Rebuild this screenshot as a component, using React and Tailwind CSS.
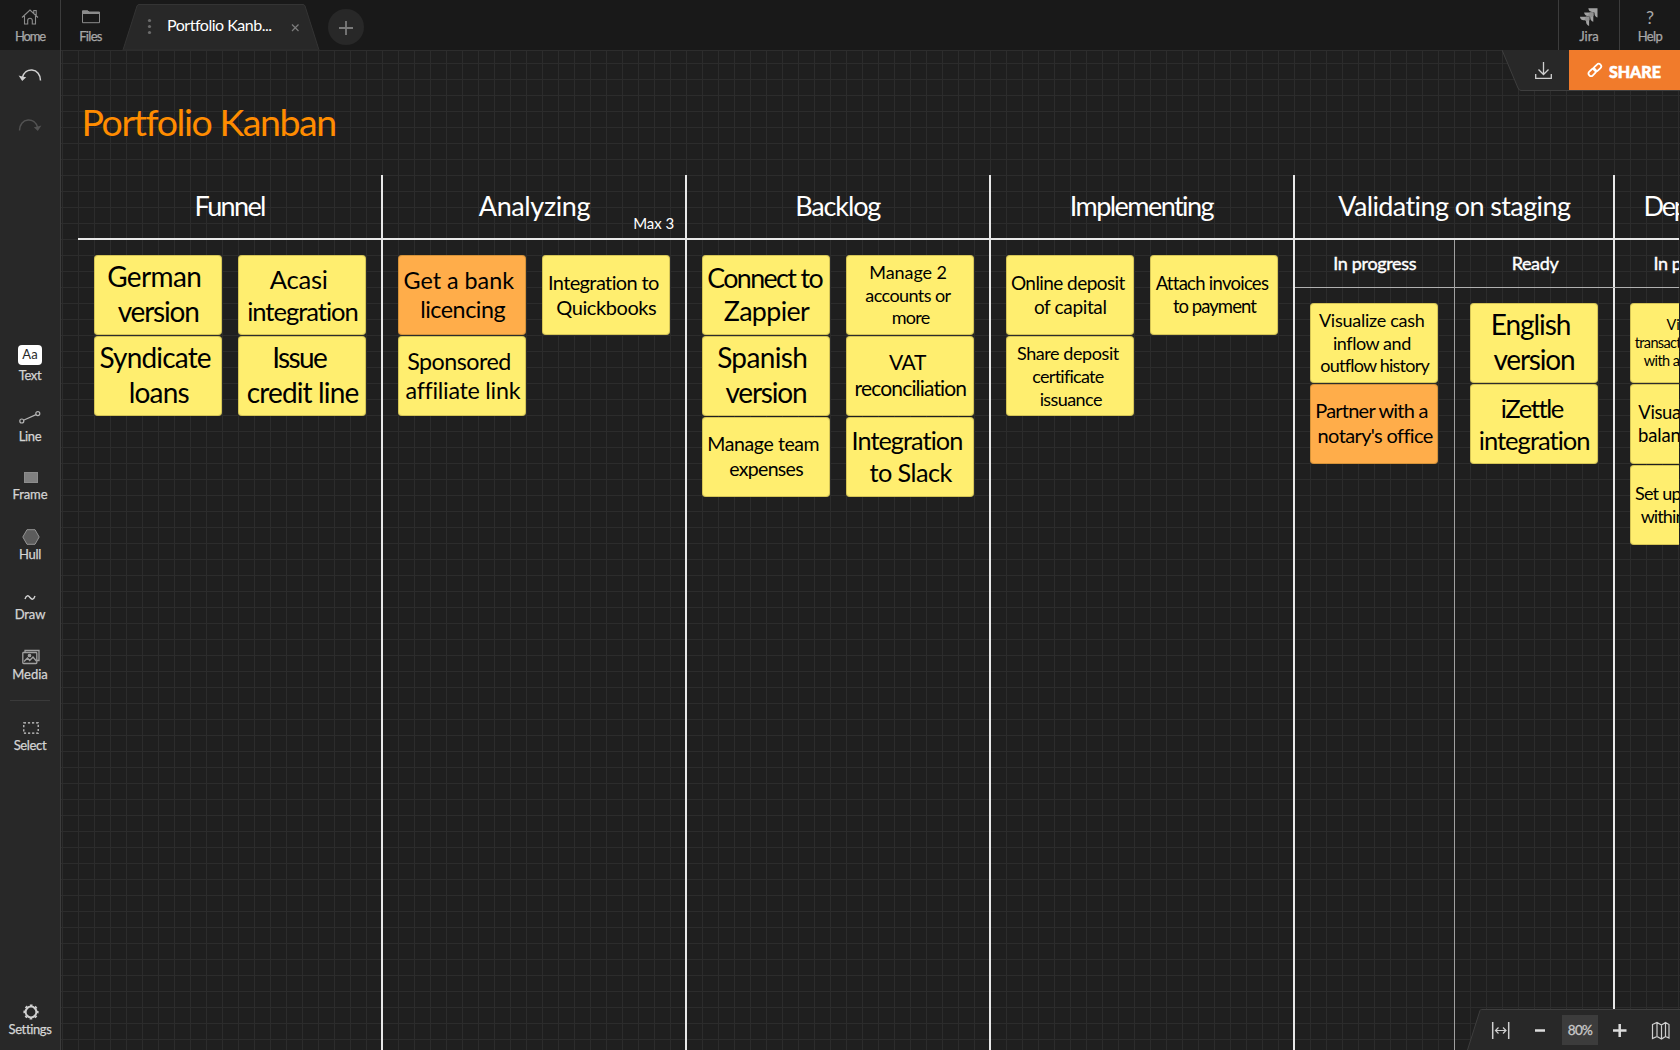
import { useLayoutEffect, useRef } from 'react';

// Text set to an exact measure: tracking is derived from the natural width.
function Fit({ w, size, lead, children, className = '' }) {
  const ref = useRef(null);
  useLayoutEffect(() => {
    const el = ref.current;
    el.style.letterSpacing = '0px';
    if (!w) return;
    const natural = el.getBoundingClientRect().width;
    el.style.letterSpacing = (w - natural + size * 0.05) / Math.max(1, children.length) + 'px';
  }, [w, size, children]);
  return (
    <span
      ref={ref}
      className={'block w-max whitespace-nowrap ' + className}
      style={{ fontSize: size, lineHeight: lead + 'px' }}
    >
      {children}
    </span>
  );
}

// b: first baseline inside the note, lead: line pitch, lines: [text, left, width]
function Note({ note }) {
  const { s, b, lead, lines, orange } = note;
  return (
    <div
      className={
        'h-20 w-32 shrink-0 overflow-visible rounded-[4px] text-black shadow-[inset_0_0_0_1px_rgba(60,50,0,0.22)] ' +
        (orange ? 'bg-[#ffad4a]' : 'bg-[#ffee6f]')
      }
      style={{ paddingTop: b + 0.6 - lead / 2 - 0.387 * s }}
    >
      {lines.map(([t, x, w]) => (
        <div key={t} style={{ paddingLeft: x - s * 0.02, height: lead }}>
          <Fit w={w} size={s} lead={lead}>{t}</Fit>
        </div>
      ))}
    </div>
  );
}

const n = (s, b, lead, lines, orange) => ({ s, b, lead, lines, orange });

const columns = [
  {
    title: 'Funnel', tx: 118, tw: 69, width: 'w-[305px]', pad: 'pl-4',
    stacks: [
      [
        n(28, 32, 34.7, [['German', 13.7, 92.7], ['version', 24.3, 79.5]]),
        n(28, 32, 34.7, [['Syndicate', 6, 110], ['loans', 35.3, 58.7]]),
      ],
      [
        n(25.6, 33, 32, [['Acasi', 32.3, 56.7], ['integration', 9.7, 109.7]]),
        n(28, 32, 34.7, [['Issue', 34.7, 52.7], ['credit line', 9.3, 110.3]]),
      ],
    ],
  },
  {
    title: 'Analyzing', tx: 97.3, tw: 110, limit: 'Max 3', width: 'w-[304px]', pad: 'pl-[15px]',
    stacks: [
      [
        n(23.3, 33.7, 29, [['Get a bank', 6, 109.3], ['licencing', 22.7, 83.7]], true),
        n(23.3, 33.7, 29, [['Sponsored', 9.7, 102.3], ['affiliate link', 8, 112.3]]),
      ],
      [n(20, 34.6, 24.5, [['Integration to', 6.3, 110.3], ['Quickbooks', 14.7, 99]])],
    ],
  },
  {
    title: 'Backlog', tx: 109.7, tw: 83.7, width: 'w-[304px]', pad: 'pl-[15px]',
    stacks: [
      [
        n(26.8, 33, 33.3, [['Connect to', 5.7, 113.7], ['Zappier', 22.3, 84]]),
        n(28, 32, 34.7, [['Spanish', 15.7, 88.7], ['version', 24, 79.5]]),
        n(19.5, 34.3, 24.5, [['Manage team', 5.7, 111], ['expenses', 27.7, 72.7]]),
      ],
      [
        n(18, 24, 22.4, [['Manage 2', 23.7, 76.7], ['accounts or', 19.7, 84.3], ['more', 46, 37]]),
        n(21, 33.7, 26, [['VAT', 43.3, 36], ['reconciliation', 9, 111]]),
        n(25.3, 33, 31.7, [['Integration', 6, 110], ['to Slack', 24, 81]]),
      ],
    ],
  },
  {
    title: 'Implementing', tx: 80.3, tw: 142.3, width: 'w-[304px]', pad: 'pl-[15px]',
    stacks: [
      [
        n(19, 35, 24, [['Online deposit', 5.3, 113], ['of capital', 28.3, 71.7]]),
        n(18, 24, 22.6, [['Share deposit', 11.3, 101], ['certificate', 26.7, 70.3], ['issuance', 34, 61.3]]),
      ],
      [n(18.5, 35, 23.3, [['Attach invoices', 6, 111], ['to payment', 23.3, 82]])],
    ],
  },
  {
    title: 'Validating on staging', tx: 44.7, tw: 231.3, width: 'w-[320px]',
    subs: [
      {
        title: 'In progress', tx: 39.3, tw: 82, width: 'w-40',
        notes: [
          n(18, 23.7, 22.6, [['Visualize cash', 9.3, 104.7], ['inflow and', 23.3, 77], ['outflow history', 10.7, 107.3]]),
          n(20, 33.7, 25.3, [['Partner with a', 5.7, 111.3], ["notary's office", 8, 113]], true),
        ],
      },
      {
        title: 'Ready', tx: 57.7, tw: 45.7, width: 'w-40',
        notes: [
          n(28, 32, 34.7, [['English', 21.3, 78.3], ['version', 24, 79.5]]),
          n(25.6, 33, 32, [['iZettle', 31.3, 60], ['integration', 9.3, 110]]),
        ],
      },
    ],
  },
  {
    title: 'Dep', tx: 30, tw: 42, width: 'w-[65px]',
    subs: [
      {
        title: 'In p', tx: 39.5, tw: 27, width: 'w-[65px]',
        notes: [
          n(14.5, 26.7, 18.2, [['Vi', 36.7, 12.5], ['transact', 5, 45.5], ['with a', 14, 35]]),
          n(18.5, 34.7, 23, [['Visua', 8.7, 41.5], ['balan', 8.3, 42]]),
          n(18, 35, 22.3, [['Set up', 5.3, 45], ['within', 11, 43]]),
        ],
      },
    ],
  },
];

function Column({ col, last }) {
  return (
    <div className={'flex h-full shrink-0 flex-col ' + col.width + (last ? '' : ' border-r-2 border-[#e8e8e8]')}>
      <div className="flex h-[63px] shrink-0 justify-between">
        <div className="pt-[15px]" style={{ paddingLeft: col.tx - 1.5 }}>
          <Fit w={col.tw} size={27} lead={32}>{col.title}</Fit>
        </div>
        {col.limit && (
          <div className="pt-[39px] pr-[11px]">
            <Fit w={40} size={15} lead={18}>{col.limit}</Fit>
          </div>
        )}
      </div>
      <div className="h-[2px] shrink-0 bg-[#e8e8e8]" />
      {col.stacks && (
        <div className={'flex gap-4 pt-[15px] ' + col.pad}>
          {col.stacks.map((stack, i) => (
            <div key={i} className="flex flex-col gap-px">
              {stack.map((note, j) => <Note key={j} note={note} />)}
            </div>
          ))}
        </div>
      )}
      {col.subs && (
        <div className="flex min-h-0 flex-1">
          {col.subs.map((sub, i) => (
            <div
              key={sub.title}
              className={'flex h-full shrink-0 flex-col ' + sub.width + (i < col.subs.length - 1 ? ' border-r border-[#a0a0a0]' : '')}
            >
              <div className="h-[48px] shrink-0 border-b border-[#b0b0b0] pt-[11px]" style={{ paddingLeft: sub.tx - 1 }}>
                <Fit w={sub.tw} size={18} lead={24} className="[-webkit-text-stroke:0.4px_white]">{sub.title}</Fit>
              </div>
              <div className="flex flex-col gap-px pt-[15px] pl-[15px]">
                {sub.notes.map((note, j) => <Note key={j} note={note} />)}
              </div>
            </div>
          ))}
        </div>
      )}
    </div>
  );
}

function Tool({ label, w, children, className = '' }) {
  return (
    <div className={'flex h-9 w-full shrink-0 flex-col items-center text-[#d4d4d4] ' + className}>
      <div className="flex h-5 shrink-0 items-center justify-center">{children}</div>
      <Fit w={w} size={13} lead={18} className="[-webkit-text-stroke:0.25px_#d4d4d4]">{label}</Fit>
    </div>
  );
}

function TopItem({ label, w, children, className = '' }) {
  return (
    <div className={'flex h-[50px] shrink-0 flex-col items-center pt-[7px] text-[#a8a8a8] ' + className}>
      <div className="flex h-5 shrink-0 items-center justify-center">{children}</div>
      <Fit w={w} size={13} lead={18} className="[-webkit-text-stroke:0.25px_#a8a8a8]">{label}</Fit>
    </div>
  );
}

function TopBar() {
  return (
    <header className="flex h-[50px] shrink-0 bg-[#191919]">
      <TopItem label="Home" w={29.5} className="w-[61px] border-r border-[#3c3c3c]">
        <svg width="18" height="16" viewBox="0 0 18 16" fill="none" stroke="#8c8c8c" strokeWidth="1.1">
          <path d="M1 8.5 9 1l8 7.5M3.5 7v8h3.2v-3.4a2.3 2.3 0 0 1 4.6 0V15h3.2V7M12.8 4V1.5h2.4v4.8" />
        </svg>
      </TopItem>
      <TopItem label="Files" w={22} className="w-[61px] pr-[2px]">
        <svg width="18" height="14" viewBox="0 0 18 14" fill="none" stroke="#8c8c8c" strokeWidth="1">
          <path d="M.5 3.5v9.2h17V3.5z" />
          <path d="M.5 3.5V.8h5.2L7 2h10.5v1.5z" fill="#8c8c8c" />
        </svg>
      </TopItem>
      <div className="relative flex h-[50px] w-[198px] shrink-0 items-center">
        <svg className="absolute inset-0" width="198" height="50" viewBox="0 0 198 50">
          <path d="M1 50 15 6q.6-1.5 2-1.5H181q1.4 0 2 1.5L197 50z" fill="#282828" stroke="#343434" />
          <path d="M1 50H197" stroke="#282828" />
          <g fill="#6c6c6c">
            <circle cx="27.5" cy="20.5" r="1.6" />
            <circle cx="27.5" cy="26.5" r="1.6" />
            <circle cx="27.5" cy="32.5" r="1.6" />
          </g>
          <path d="m170 24.5 6.5 6.5m0-6.5-6.500 6.500" stroke="#7c7c7c" strokeWidth="1.2" />
        </svg>
        <div className="relative pb-px pl-[45px] text-white">
          <Fit w={103.5} size={16} lead={20}>Portfolio Kanb...</Fit>
        </div>
      </div>
      <div className="mt-[9px] ml-2 flex size-9 items-center justify-center rounded-full bg-[#282828]">
        <svg className="mt-0.5" width="16" height="16" viewBox="0 0 16 16">
          <path d="M8 1v14M1 8h14" stroke="#7a7a7a" strokeWidth="1.8" />
        </svg>
      </div>
      <div className="ml-auto flex">
        <TopItem label="Jira" w={19} className="w-[61px] border-l border-[#3c3c3c]">
          <svg width="18" height="18" viewBox="0 0 18 18" fill="#a2a2a2">
            <path d="M8.3.3h9.2v9.2c-2-.6-3-2-3-3.800V5.300q0-1.400-1.400-1.400h-1.200C10 3.900 8.600 2.500 8.300.3z" />
            <path d="M7.500 4.500h5.800v9.200c-2-.6-3-2-3-3.800V9.500q0-1.400-1.400-1.400H7.700C5.800 8.100 4.400 6.700 4.100 4.500z" />
            <path d="M3.500 8.700h5.600v9.200c-2-.6-3-2-3-3.800v-.4q0-1.400-1.400-1.400H3.500C1.600 12.300.2 10.900-.1 8.700z" />
            <path d="m10 4 3.800 0v4l-3.500 1.500-2.500-2zM6 8.300h3.800v4L6.500 13.500l-1.800-2z" fill="#8a8a8a" opacity=".75" />
          </svg>
        </TopItem>
        <TopItem label="Help" w={24} className="w-[61px] border-l border-[#3c3c3c]">
          <span className="text-[18px] leading-5">?</span>
        </TopItem>
      </div>
    </header>
  );
}

function SideBar() {
  return (
    <aside className="flex w-[61px] shrink-0 flex-col border-r border-[#3c3c3c] bg-[#282828]">
      <div className="flex h-[296px] shrink-0 flex-col items-center pt-[18px]">
        <svg width="24" height="14" viewBox="0 0 24 14" fill="none" stroke="#d0d0d0" strokeWidth="1.5">
          <path d="M4 10.500C5.500 4 10 1.700 14 2c5 .4 8.500 4.500 8.500 10.500" />
          <path d="M.6 7.600 4.200 13 8.200 9.200 4.200 8.600z" fill="#d0d0d0" stroke="none" />
        </svg>
        <svg className="mt-9" width="24" height="14" viewBox="0 0 24 14" fill="none" stroke="#525252" strokeWidth="1.5">
          <path d="M20 10.500C18.500 4 14 1.700 10 2 5 2.400 1.500 6.500 1.500 12.500" />
          <path d="M23.400 7.600 19.800 13l-4-3.800 4-.6z" fill="#525252" stroke="none" />
        </svg>
      </div>
      <Tool label="Text" w={22}>
        <span className="mb-[2px] flex h-5 w-6 shrink-0 items-center justify-center rounded-[4px] bg-white text-[13px] text-[#282828]">Aa</span>
      </Tool>
      <Tool label="Line" w={22} className="mt-[25px]">
        <svg width="22" height="14" viewBox="0 0 22 14" fill="none" stroke="#b4b4b4" strokeWidth="1.2">
          <path d="m4.500 10.300 12.500-5.700" />
          <circle cx="2.800" cy="11" r="2" />
          <circle cx="18.800" cy="3.600" r="2" />
        </svg>
      </Tool>
      <Tool label="Frame" w={34.5} className="mt-[22px]">
        <span className="mt-1 ml-px h-[11px] w-[14px] border border-[#8c8c8c] bg-[#808080]" />
      </Tool>
      <Tool label="Hull" w={21.5} className="mt-6">
        <svg className="mt-1 ml-px" width="18" height="16" viewBox="0 0 18 16">
          <path d="M5 .7h8L17.200 8 13 15.300H5L.8 8z" fill="#5c5c5c" stroke="#949494" />
        </svg>
      </Tool>
      <Tool label="Draw" w={30} className="mt-6">
        <svg className="mt-1" width="12" height="7" viewBox="0 0 12 7">
          <path d="M1 5C2.500 1 4 1 6 3.500S9.500 6 11 2" fill="none" stroke="#d4d4d4" strokeWidth="1.4" />
        </svg>
      </Tool>
      <Tool label="Media" w={35} className="mt-6">
        <svg className="mt-1 ml-px" width="18" height="16" viewBox="0 0 18 16" fill="none" stroke="#a0a0a0" strokeWidth="1.3">
          <path d="M3 3.200V1.500h14v10h-2" />
          <rect x=".8" y="3.500" width="14" height="11" rx=".8" />
          <circle cx="7.500" cy="6.500" r="1.200" fill="#a0a0a0" />
          <path d="m2 12.500 3.500-3.500 2.200 2.500 3.300-3.500 3.300 4" />
        </svg>
      </Tool>
      <div className="mx-auto mt-[19px] h-px w-10 shrink-0 bg-[#3a3a3a]" />
      <Tool label="Select" w={32} className="mt-[15px]">
        <svg className="mt-1 ml-px" width="16" height="12" viewBox="0 0 16 12">
          <rect x=".8" y=".8" width="14.4" height="10.4" fill="none" stroke="#d0d0d0" strokeWidth="1.2" strokeDasharray="2.2 1.9" />
        </svg>
      </Tool>
      <Tool label="Settings" w={42} className="mt-auto mb-[14px]">
        <svg className="mt-1 ml-px" width="16" height="16" viewBox="0 0 16 16" fill="none" stroke="#d0d0d0">
          <circle cx="8" cy="8" r="5.4" strokeWidth="2" />
          <circle cx="8" cy="8" r="6.800" strokeWidth="1.600" strokeDasharray="2.600 2.740" strokeDashoffset="1.300" />
        </svg>
      </Tool>
    </aside>
  );
}

function ShareBar() {
  return (
    <div className="absolute -top-px right-0 flex h-[41px] w-[178px]">
      <svg className="absolute inset-0" width="178" height="41" viewBox="0 0 178 41">
        <path d="M0 0 16 38q1 2.500 3 2.500H178V0z" fill="#282828" />
        <path d="M0 0 16 38q1 2.500 3 2.500H178" fill="none" stroke="#3e3e3e" />
        <g fill="none" stroke="#cfcfcf" strokeWidth="1.3">
          <path d="M41.500 12v12M36.500 19.500l5 5 5-5" />
          <path d="M33.700 24v4.300h15.600V24" />
        </g>
      </svg>
      <div className="relative ml-auto flex h-10 w-[111px] items-center bg-[#f17b2b] pl-[18px] text-white">
        <svg width="16" height="16" viewBox="0 0 16 16" fill="none" stroke="#fff" strokeWidth="1.8">
          <rect x="-4.200" y="-2.500" width="8.400" height="5" rx="2.500" transform="translate(5.300 10.300) rotate(-45)" />
          <rect x="-4.200" y="-2.500" width="8.400" height="5" rx="2.500" transform="translate(10.500 5.500) rotate(-45)" />
        </svg>
        <div className="pt-[3px] pl-[6px]">
          <Fit w={51} size={16} lead={20} className="font-black [-webkit-text-stroke:0.6px_white]">SHARE</Fit>
        </div>
      </div>
    </div>
  );
}

function ZoomBar() {
  return (
    <div className="absolute right-0 bottom-0 flex h-[41px] w-[213px] items-center">
      <svg className="absolute inset-0" width="213" height="41" viewBox="0 0 213 41">
        <path d="M.5 41 13 1.500Q13.300.500 14.500.500H213V41z" fill="#282828" />
        <path d="M.5 41 13 1.500Q13.300.500 14.500.500H213" fill="none" stroke="#3e3e3e" />
        <g fill="none" stroke="#cfcfcf" strokeWidth="1.2">
          <path d="M25.700 13v17M41.700 13v17" strokeWidth="1.5" />
          <path d="M28.500 21.500h10.500M31.500 18.500l-3 3 3 3M36 18.500l3 3-3 3" />
          <path d="M185.500 15.500 190 13.500l4.500 2.500 4-2.500 3.500 2V29l-3.500-1.500-4 2.500-4.500-2.500-4.500 2zM190 13.500v14M194.500 16v14M198.500 13.500v14" />
        </g>
        <path d="M68 21.500h10M146 21.500h13.500M152.700 15v13" stroke="#dcdcdc" strokeWidth="2.5" />
      </svg>
      <div className="relative ml-[95px] flex h-[30px] w-9 items-center justify-center bg-[#3c3c3c] text-[#c8c8c8]">
        <Fit w={24} size={13.5} lead={16} className="[-webkit-text-stroke:0.3px_#c8c8c8]">80%</Fit>
      </div>
    </div>
  );
}

export default function App() {
  return (
    <div className="flex h-[1050px] w-[1680px] flex-col overflow-hidden bg-[#1f1f1f] font-['Lato','Open_Sans',sans-serif] text-white">
      <TopBar />
      <div className="flex min-h-0 flex-1">
        <SideBar />
        <main className="relative flex min-w-0 flex-1 flex-col border-t border-[#2d2d2d] bg-[linear-gradient(to_right,#2c2c2c_1px,transparent_1px),linear-gradient(to_bottom,#2c2c2c_1px,transparent_1px)] bg-[size:16px_16px] bg-[position:1px_12px]">
          <div className="h-[124px] shrink-0 pt-[49px] pl-[20.5px] text-[#ff8c00]">
            <Fit w={251.5} size={37.5} lead={44}>Portfolio Kanban</Fit>
          </div>
          <div className="mr-px flex min-h-0 flex-1 overflow-hidden pl-[17px]">
            {columns.map((c, i) => <Column key={c.title} col={c} last={i === columns.length - 1} />)}
          </div>
          <ShareBar />
          <ZoomBar />
        </main>
      </div>
    </div>
  );
}
